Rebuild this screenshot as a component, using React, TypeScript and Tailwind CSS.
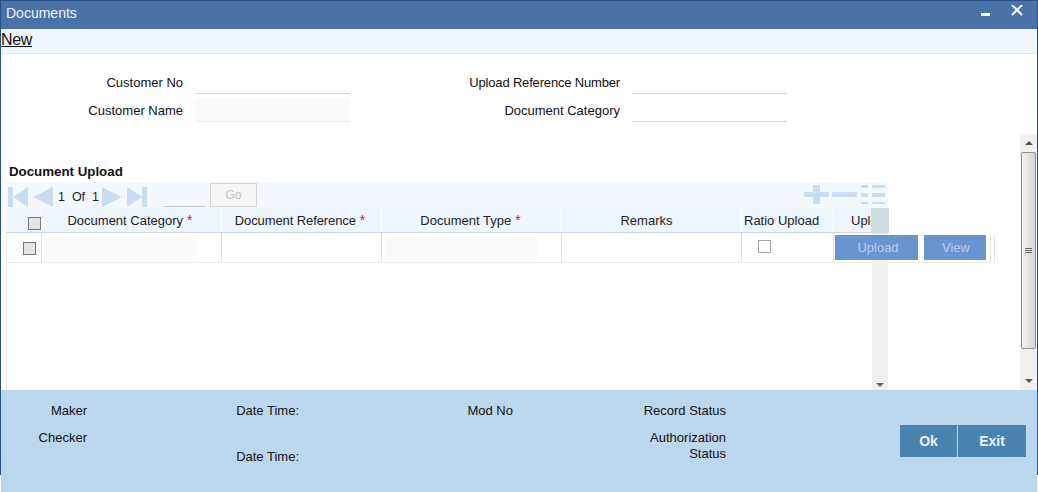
const columns = [
  { label: "Document Category", required: true, width: "w-[180px]", shift: "pr-[3px]", tracking: "" },
  { label: "Document Reference", required: true, width: "w-[160px]", shift: "pr-[3px]", tracking: "tracking-[-0.1px]" },
  { label: "Document Type", required: true, width: "w-[180px]", shift: "pr-[2px]", tracking: "" },
  { label: "Remarks", required: false, width: "w-[180px]", shift: "pr-[10px]", tracking: "" },
];

function Field({ label, filled, labelWidth, tight }: { label: string; filled?: boolean; labelWidth: string; tight?: boolean }) {
  return (
    <div className="flex items-center h-[28px]">
      <span className={`${labelWidth} ${tight ? "tracking-[-0.17px]" : ""} pt-[2px] text-right text-[13px] text-[#111] whitespace-nowrap`}>{label}</span>
      <div
        className={`ml-[12px] w-[155px] h-[24px] border-b ${
          filled ? "bg-[#fafafa] border-[#eeeeee]" : "bg-white border-[#d4d4d4]"
        }`}
      />
    </div>
  );
}

function Checkbox({ plain }: { plain?: boolean }) {
  return (
    <span
      className={`block w-[13px] h-[13px] border ${
        plain ? "bg-white border-[#a8a8a8]" : "bg-[#e4e4e4] border-[#777]"
      }`}
    />
  );
}

function NavArrows() {
  return (
    <svg width="60" height="26" viewBox="0 0 60 26" className="text-[#c9dcf2]" fill="currentColor">
      <rect x="2" y="5" width="5" height="20" />
      <path d="M7 15 22 5v20zM27 15 47 5v20z" />
    </svg>
  );
}

function NavArrowsRight() {
  return (
    <svg width="46" height="26" viewBox="0 0 46 26" className="text-[#c9dcf2]" fill="currentColor">
      <path d="M0 5l20 10L0 25zM25 5l15 10-15 10z" />
      <rect x="40" y="5" width="5" height="20" />
    </svg>
  );
}

function Scrollbar({ thumb }: { thumb?: boolean }) {
  return (
    <div className="w-[17px] h-full bg-[#f0f0f0] flex flex-col items-center">
      <div className="h-[18px] flex items-center justify-center">
        <span className="block w-0 h-0 border-x-[4px] border-x-transparent border-b-[4px] border-b-[#555]" />
      </div>
      {thumb && (
        <div className="w-[15px] h-[197px] bg-gradient-to-r from-[#f2f2f2] to-[#d4d4d4] border border-[#8e8e8e] rounded-[2px] flex flex-col items-center justify-center gap-[1px]">
          <span className="block w-[7px] h-px bg-[#666]" />
          <span className="block w-[7px] h-px bg-[#666]" />
          <span className="block w-[7px] h-px bg-[#666]" />
        </div>
      )}
      <div className="mt-auto h-[18px] flex items-center justify-center">
        <span className="block w-0 h-0 border-x-[4px] border-x-transparent border-t-[4px] border-t-[#555]" />
      </div>
    </div>
  );
}

function FooterLabel({ children, width }: { children: React.ReactNode; width: string }) {
  return <div className={`${width} text-right text-[13px] leading-[16px] text-[#111]`}>{children}</div>;
}

export default function App() {
  return (
    <div className="w-[1038px] h-[492px] overflow-hidden flex flex-col bg-white font-['Liberation_Sans',Arial,sans-serif] relative">
      {/* Title bar */}
      <div className="h-[29px] shrink-0 bg-[#4a72a9] border-t border-x border-[#2b5189] border-b-[#7c97b8] flex items-start justify-between pl-[5px] pt-[4px]">
        <span className="text-[14px] leading-[17px] text-[#eef3fa]">Documents</span>
        <svg width="44" height="14" viewBox="0 0 44 14" className="mr-[12px] text-white" fill="none" stroke="currentColor">
          <path d="M0 9.5h9" strokeWidth="3" />
          <path d="M31 0l10 10M41 0 31 10" strokeWidth="2" />
        </svg>
      </div>

      <div className="flex-1 flex flex-col border-x border-[#2b5189] min-h-0">
        {/* Toolbar */}
        <div className="h-[25px] shrink-0 bg-[#eef5fe] border-b border-[#e6e6e6] flex items-center pb-[2px]">
          <span className="text-[16px] tracking-[-0.3px] text-[#111] underline">New</span>
        </div>

        {/* Header form */}
        <div className="h-[80px] shrink-0 pt-[14px] flex">
          <div className="w-[447px]">
            <Field label="Customer No" labelWidth="w-[182px]" />
            <Field label="Customer Name" filled labelWidth="w-[182px]" />
          </div>
          <div>
            <Field label="Upload Reference Number" labelWidth="w-[172px]" tight />
            <Field label="Document Category" labelWidth="w-[172px]" />
          </div>
        </div>

        {/* Scrolling body */}
        <div className="flex-1 flex min-h-0">
          <div className="flex-1 pl-[5px] pt-[27px] overflow-hidden">
            <div className="pl-[3px] h-[21px] flex items-center text-[13.3px] font-bold text-[#111]">Document Upload</div>

            {/* Pager */}
            <div className="w-[882px] h-[26px] bg-[#f3f8fe] flex items-center">
              <NavArrows />
              <span className="ml-[-8px] w-[44px] pt-[5px] text-[12.5px] text-[#222] whitespace-pre">1  Of  1</span>
              <NavArrowsRight />
              <div className="ml-[16px] w-[41px] h-[20px] self-end mb-[1px] border-b border-[#c9c9c9]" />
              <div className="ml-[5px] w-[47px] h-[24px] border border-[#d5d5d5] bg-[#f6f6f6] text-[12px] text-[#c4c4c4] flex items-center justify-center">
                Go
              </div>
              <div className="ml-auto mr-[3px] flex items-center text-[#c9dcf2]">
                <svg width="81" height="26" viewBox="0 0 81 26" fill="currentColor">
                  <path d="M0 10h9V3h7v7h9v5h-9v7H9v-7H0zM28 10h25v5H28zM57 3h7v3h-7zM68 3h13v3H68zM57 11h7v4h-7zM68 11h13v4H68zM57 20h7v2h-7zM68 20h13v2H68z" />
                </svg>
              </div>
            </div>

            {/* Grid */}
            <div className="relative w-[990px]">
              <div className="w-[883px] h-[25px] flex bg-[#eef5fe] border-b border-[#c9d8e8] text-[13px] text-[#222]">
                <div className="w-[36px] pl-[22px] pt-[9px] border-r border-white">
                  <Checkbox />
                </div>
                {columns.map((c) => (
                  <div key={c.label} className={`${c.width} ${c.shift} ${c.tracking} pt-[1px] flex items-center justify-center gap-[4px] border-r border-white`}>
                    {c.label}
                    {c.required && <span className="text-[#cc1f1f] text-[14px]">*</span>}
                  </div>
                ))}
                <div className="w-[92px] pl-[2px] pt-[1px] flex items-center border-r border-white">Ratio Upload</div>
                <div className="w-[37px] pl-[17px] pt-[1px] flex items-center overflow-hidden whitespace-nowrap">Upload</div>
                <div className="w-[18px] bg-[#cfdfe0]" />
              </div>
              <div className="h-[30px] flex border-b border-[#f3e9e4] w-[989px]">
                <div className="w-[36px] pl-[17px] pt-[9px] border-r border-[#d7dfe8]">
                  <Checkbox />
                </div>
                <div className="w-[180px] pl-[2px] flex items-center border-r border-[#d7dfe8]">
                  <div className="w-[154px] h-[22px] bg-[#fafafa]" />
                </div>
                <div className="w-[160px] border-r border-[#d7dfe8]" />
                <div className="w-[180px] pl-[3px] flex items-center border-r border-[#d7dfe8]">
                  <div className="w-[153px] h-[22px] bg-[#fafafa]" />
                </div>
                <div className="w-[180px] border-r border-[#d7dfe8]" />
                <div className="w-[92px] pl-[16px] pt-[7px] border-r border-[#d7dfe8]">
                  <Checkbox plain />
                </div>
                <div className="relative z-10 flex items-start pt-[2px] pl-[1px] text-[13px] text-[#b9cdea]">
                  <div className="w-[83px] h-[25px] pl-[3px] pt-[1px] bg-[#6a94d0] flex items-center justify-center">Upload</div>
                  <div className="ml-[6px] w-[62px] h-[25px] pl-[2px] pt-[1px] bg-[#6a94d0] flex items-center justify-center">View</div>
                  <div className="ml-[4px] h-[28px] w-[5px] border-x border-[#e3e3e3]" />
                </div>
              </div>
              {/* Faint left edge of the grid body */}
              <div className="absolute left-0 top-[25px] w-px h-[157px] bg-[#eeeeee]" />
              {/* Inner grid scrollbar, lying over the overflowing row */}
              <div className="absolute left-[866px] top-[25px] h-[157px]">
                <div className="w-[16px] h-full bg-[#f0f0f0] flex flex-col items-center justify-end pb-[3px]">
                  <span className="block w-0 h-0 border-x-[4px] border-x-transparent border-t-[4px] border-t-[#666]" />
                </div>
              </div>
            </div>
          </div>
          <Scrollbar thumb />
        </div>
      </div>

      {/* Audit footer */}
      <div className="h-[102px] shrink-0 bg-[#bbd7ed] mx-px flex pt-[13px] relative">
        <div className="absolute -left-px top-0 h-[85px] w-px bg-[#2b5189]" />
        <div className="w-[86px] flex flex-col gap-[11px]">
          <FooterLabel width="w-full">Maker</FooterLabel>
          <FooterLabel width="w-full">Checker</FooterLabel>
        </div>
        <div className="w-[212px] flex flex-col gap-[30px]">
          <FooterLabel width="w-full">Date Time:</FooterLabel>
          <FooterLabel width="w-full">Date Time:</FooterLabel>
        </div>
        <FooterLabel width="w-[214px]">Mod No</FooterLabel>
        <div className="w-[213px] flex flex-col gap-[11px]">
          <FooterLabel width="w-full">Record Status</FooterLabel>
          <FooterLabel width="w-full">
            Authorization
            <br />
            Status
          </FooterLabel>
        </div>
        <div className="ml-[174px] mt-[22px] flex h-[32px] text-[14px] font-bold text-[#eaf3fa]">
          <div className="w-[58px] bg-[#4a82b0] border-r border-[#bbd7ed] flex items-center justify-center">Ok</div>
          <div className="w-[68px] bg-[#4a82b0] flex items-center justify-center">Exit</div>
        </div>
        <div className="absolute -right-px top-0 h-[85px] w-px bg-[#2b5189]" />
      </div>
    </div>
  );
}
